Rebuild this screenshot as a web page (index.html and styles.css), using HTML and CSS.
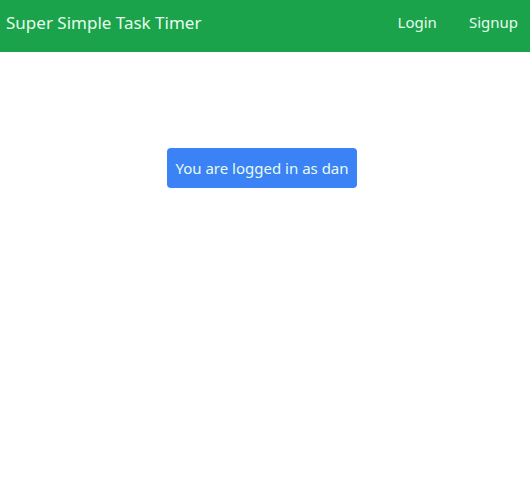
FILE: index.html
```html
<!DOCTYPE html>
<html lang="en">
<head>
<meta charset="utf-8">
<title>Super Simple Task Timer</title>
<link rel="stylesheet" href="styles.css">
</head>
<body>
<header class="navbar">
  <a class="brand" href="#">Super Simple Task Timer</a>
  <nav class="links">
    <a href="#">Login</a>
    <a href="#">Signup</a>
  </nav>
</header>
<main class="content">
  <p class="notice">You are logged in as dan</p>
</main>
</body>
</html>
```
FILE: styles.css
```css
* {
  box-sizing: border-box;
}

body {
  margin: 0;
  background: #fff;
  font-family: "Segoe UI", "Noto Sans", "Open Sans", sans-serif;
  font-size: 15px;
  line-height: 24px;
}

.navbar {
  display: flex;
  justify-content: space-between;
  align-items: flex-start;
  padding: 10px 12px 16px 6px;
  background: #1aa34a;
  color: #e6fcee;
}

.navbar a {
  color: inherit;
  text-decoration: none;
}

.brand {
  font-size: 17px;
  line-height: 26px;
}

.links {
  display: flex;
  gap: 32px;
}

.content {
  display: flex;
  justify-content: center;
  padding: 96px 6px 0 0;
}

.notice {
  margin: 0;
  padding: 8px;
  border-radius: 4px;
  background: #3b82f6;
  color: #e6fcee;
}
```
